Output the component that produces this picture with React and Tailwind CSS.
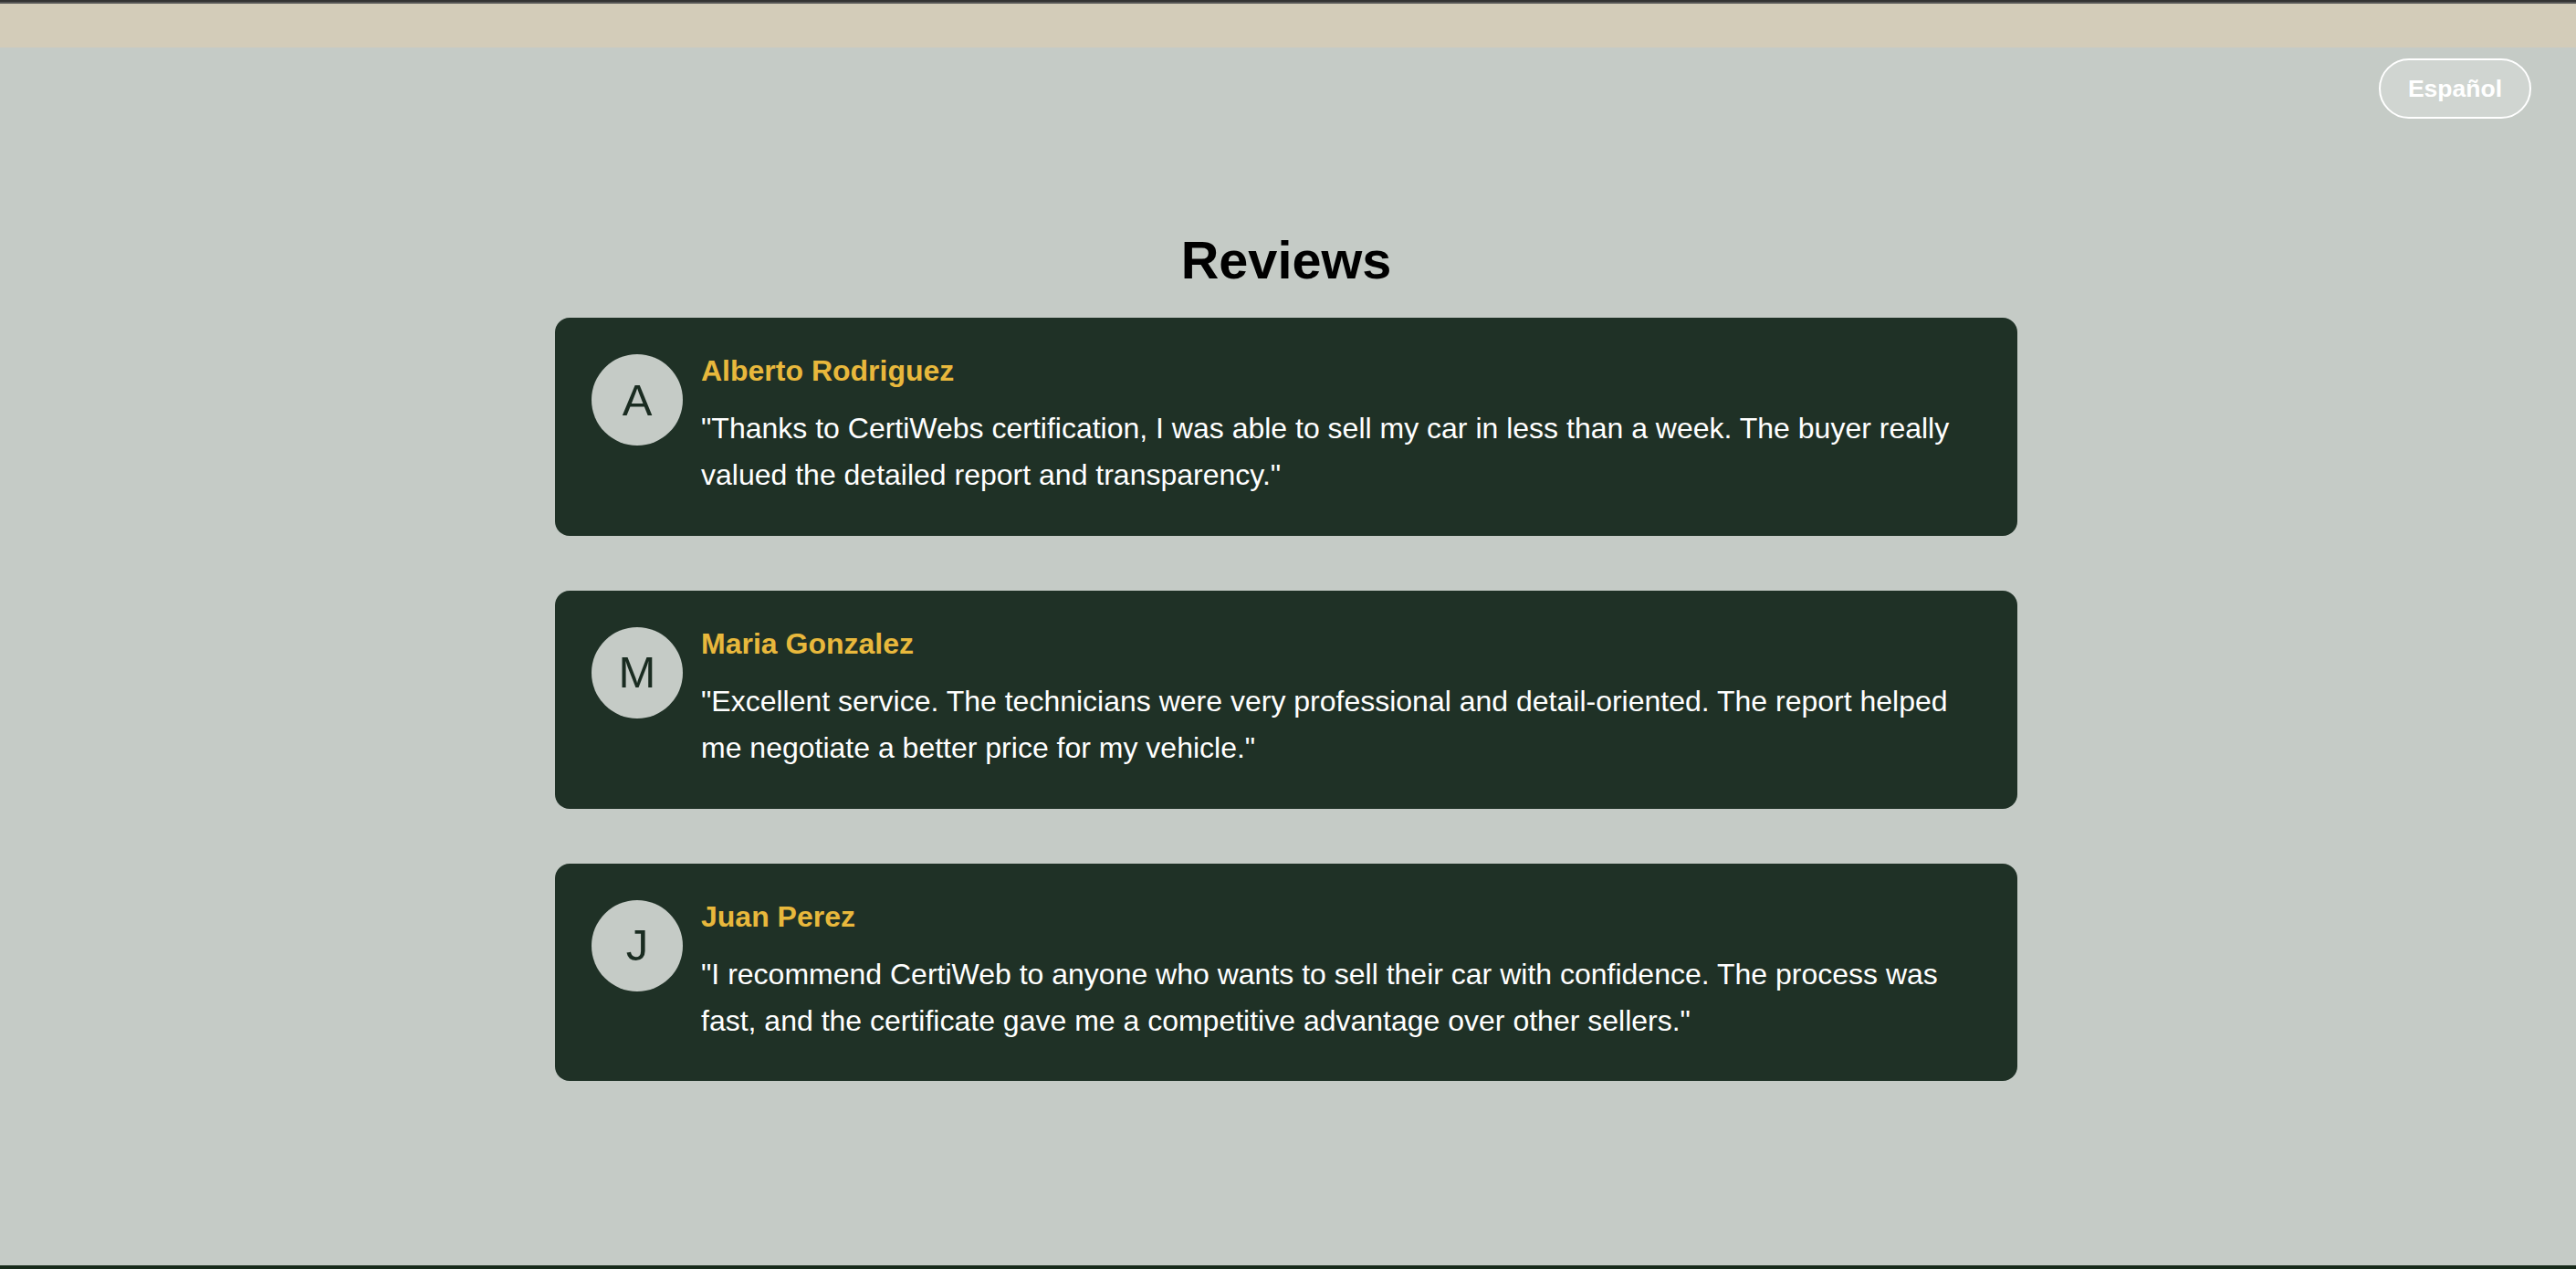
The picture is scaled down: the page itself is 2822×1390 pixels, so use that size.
import React from 'react';

const reviews = [
    {
        name: 'Alberto Rodriguez',
        text: '"Thanks to CertiWebs certification, I was able to sell my car in less than a week. The buyer really valued the detailed report and transparency."',
    },
    {
        name: 'Maria Gonzalez',
        text: '"Excellent service. The technicians were very professional and detail-oriented. The report helped me negotiate a better price for my vehicle."',
    },
    {
        name: 'Juan Perez',
        text: '"I recommend CertiWeb to anyone who wants to sell their car with confidence. The process was fast, and the certificate gave me a competitive advantage over other sellers."',
    },
];

function ReviewCard({ name, text }) {
    return (
        <div className="w-[1602px] bg-[#1f3126] rounded-[16px] pt-[40px] pl-[40px] pr-[40px] pb-[40px] flex gap-[20px]">
            <div className="w-[100px] h-[100px] shrink-0 rounded-full bg-[#c5cbc6] flex items-center justify-center text-[49px] leading-none text-[#1a2c21]">
                {name.charAt(0)}
            </div>
            <div className="flex flex-col">
                <h3 className="text-[32px] leading-[37px] font-bold text-[#e8b83c]">{name}</h3>
                <p className="mt-[19px] text-[32px] leading-[51.4px] text-white">{text}</p>
            </div>
        </div>
    );
}

export default function App() {
    return (
        <div className="min-h-screen flex flex-col bg-[#c5cbc6] font-['Liberation_Sans',Arial,sans-serif]">
            <header className="h-[52px] shrink-0 bg-[#d3ccb9] flex flex-col">
                <div className="h-[2px] bg-[#333333]" />
                <div className="h-[2px] bg-[#555555]" />
            </header>

            <main className="flex-1 flex flex-col">
                <div className="flex justify-end pt-[12px] pr-[49px]">
                    <button className="border-2 border-white rounded-full bg-white/20 px-[30px] py-[16px] text-[26.5px] leading-[30px] font-bold text-white">
                        Español
                    </button>
                </div>

                <section className="flex flex-col items-center pr-[4px] pb-[60px]">
                    <h2 className="mt-[122px] text-[57.6px] leading-[66px] font-bold text-black">Reviews</h2>
                    <div className="mt-[30px] flex flex-col gap-[60px]">
                        {reviews.map((r) => (
                            <ReviewCard key={r.name} name={r.name} text={r.text} />
                        ))}
                    </div>
                </section>
            </main>

            <footer className="h-[4px] shrink-0 bg-[#172a1a]" />
        </div>
    );
}
